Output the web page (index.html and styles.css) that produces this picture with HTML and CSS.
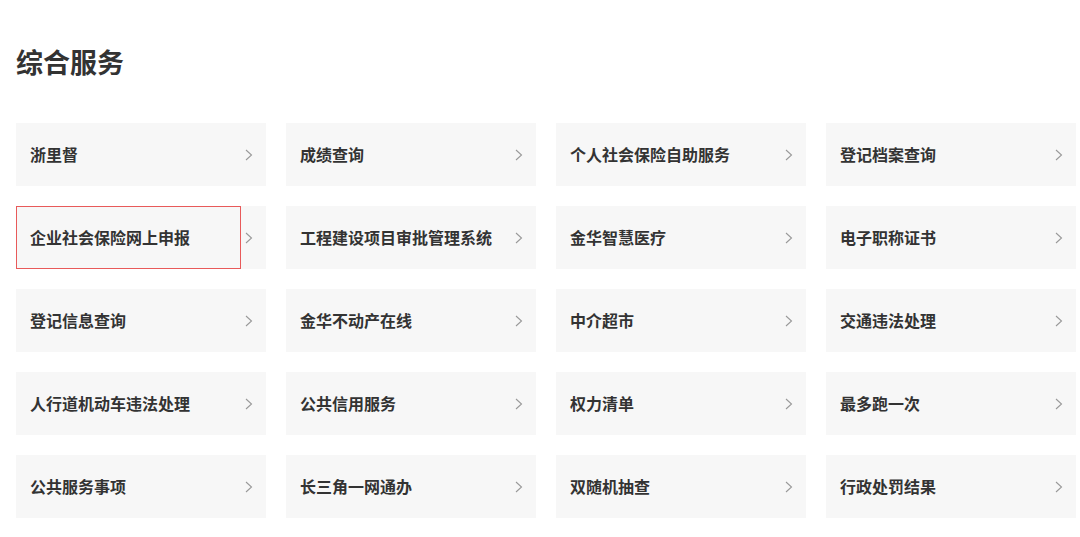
FILE: index.html
```html
<!DOCTYPE html>
<html lang="zh-CN">
<head>
    <meta charset="UTF-8">
    <meta name="viewport" content="width=device-width, initial-scale=1.0">
    <title>综合服务</title>
    <link rel="stylesheet" href="styles.css">
</head>
<body>
    <div class="container">
        <h2 class="title">综合服务</h2>

        <div class="service-grid">
            <a class="card" href="#"><span class="label">浙里督</span><span class="arrow"><svg viewBox="0 0 8 12" width="8" height="12"><path d="M1 1l5.5 5L1 11" /></svg></span></a>
            <a class="card" href="#"><span class="label">成绩查询</span><span class="arrow"><svg viewBox="0 0 8 12" width="8" height="12"><path d="M1 1l5.5 5L1 11" /></svg></span></a>
            <a class="card" href="#"><span class="label">个人社会保险自助服务</span><span class="arrow"><svg viewBox="0 0 8 12" width="8" height="12"><path d="M1 1l5.5 5L1 11" /></svg></span></a>
            <a class="card" href="#"><span class="label">登记档案查询</span><span class="arrow"><svg viewBox="0 0 8 12" width="8" height="12"><path d="M1 1l5.5 5L1 11" /></svg></span></a>

            <a class="card active" href="#"><span class="label">企业社会保险网上申报</span><span class="arrow"><svg viewBox="0 0 8 12" width="8" height="12"><path d="M1 1l5.5 5L1 11" /></svg></span></a>
            <a class="card" href="#"><span class="label">工程建设项目审批管理系统</span><span class="arrow"><svg viewBox="0 0 8 12" width="8" height="12"><path d="M1 1l5.5 5L1 11" /></svg></span></a>
            <a class="card" href="#"><span class="label">金华智慧医疗</span><span class="arrow"><svg viewBox="0 0 8 12" width="8" height="12"><path d="M1 1l5.5 5L1 11" /></svg></span></a>
            <a class="card" href="#"><span class="label">电子职称证书</span><span class="arrow"><svg viewBox="0 0 8 12" width="8" height="12"><path d="M1 1l5.5 5L1 11" /></svg></span></a>

            <a class="card" href="#"><span class="label">登记信息查询</span><span class="arrow"><svg viewBox="0 0 8 12" width="8" height="12"><path d="M1 1l5.5 5L1 11" /></svg></span></a>
            <a class="card" href="#"><span class="label">金华不动产在线</span><span class="arrow"><svg viewBox="0 0 8 12" width="8" height="12"><path d="M1 1l5.5 5L1 11" /></svg></span></a>
            <a class="card" href="#"><span class="label">中介超市</span><span class="arrow"><svg viewBox="0 0 8 12" width="8" height="12"><path d="M1 1l5.5 5L1 11" /></svg></span></a>
            <a class="card" href="#"><span class="label">交通违法处理</span><span class="arrow"><svg viewBox="0 0 8 12" width="8" height="12"><path d="M1 1l5.5 5L1 11" /></svg></span></a>

            <a class="card" href="#"><span class="label">人行道机动车违法处理</span><span class="arrow"><svg viewBox="0 0 8 12" width="8" height="12"><path d="M1 1l5.5 5L1 11" /></svg></span></a>
            <a class="card" href="#"><span class="label">公共信用服务</span><span class="arrow"><svg viewBox="0 0 8 12" width="8" height="12"><path d="M1 1l5.5 5L1 11" /></svg></span></a>
            <a class="card" href="#"><span class="label">权力清单</span><span class="arrow"><svg viewBox="0 0 8 12" width="8" height="12"><path d="M1 1l5.5 5L1 11" /></svg></span></a>
            <a class="card" href="#"><span class="label">最多跑一次</span><span class="arrow"><svg viewBox="0 0 8 12" width="8" height="12"><path d="M1 1l5.5 5L1 11" /></svg></span></a>

            <a class="card" href="#"><span class="label">公共服务事项</span><span class="arrow"><svg viewBox="0 0 8 12" width="8" height="12"><path d="M1 1l5.5 5L1 11" /></svg></span></a>
            <a class="card" href="#"><span class="label">长三角一网通办</span><span class="arrow"><svg viewBox="0 0 8 12" width="8" height="12"><path d="M1 1l5.5 5L1 11" /></svg></span></a>
            <a class="card" href="#"><span class="label">双随机抽查</span><span class="arrow"><svg viewBox="0 0 8 12" width="8" height="12"><path d="M1 1l5.5 5L1 11" /></svg></span></a>
            <a class="card" href="#"><span class="label">行政处罚结果</span><span class="arrow"><svg viewBox="0 0 8 12" width="8" height="12"><path d="M1 1l5.5 5L1 11" /></svg></span></a>
        </div>
    </div>
</body>
</html>
```

FILE: styles.css
```css
body {
    margin: 0;
    padding: 0;
    background-color: #fff;
    font-family: "Noto Sans CJK SC", "Noto Sans", sans-serif;
    color: #333;
}

.container {
    padding: 0 4px 0 16px;
}

.title {
    margin: 42px 0 41px;
    font-size: 27px;
    line-height: 40px;
    font-weight: 700;
    color: #333;
}

.service-grid {
    display: grid;
    grid-template-columns: repeat(4, 250px);
    column-gap: 20px;
    row-gap: 20px;
}

.card {
    display: flex;
    height: 63px;
    background-color: #f7f7f7;
    text-decoration: none;
    color: #333;
}

.label {
    flex: 1;
    display: flex;
    align-items: center;
    padding: 0 0 2px 13px;
    font-size: 16px;
    font-weight: 700;
    border: 1px solid transparent;
    white-space: nowrap;
}

.card.active .label {
    border-color: #e85a5a;
}

.arrow {
    width: 25px;
    display: flex;
    align-items: center;
    padding-left: 4px;
    box-sizing: border-box;
}

.arrow svg {
    fill: none;
    stroke: #999;
    stroke-width: 1.1;
}
```
